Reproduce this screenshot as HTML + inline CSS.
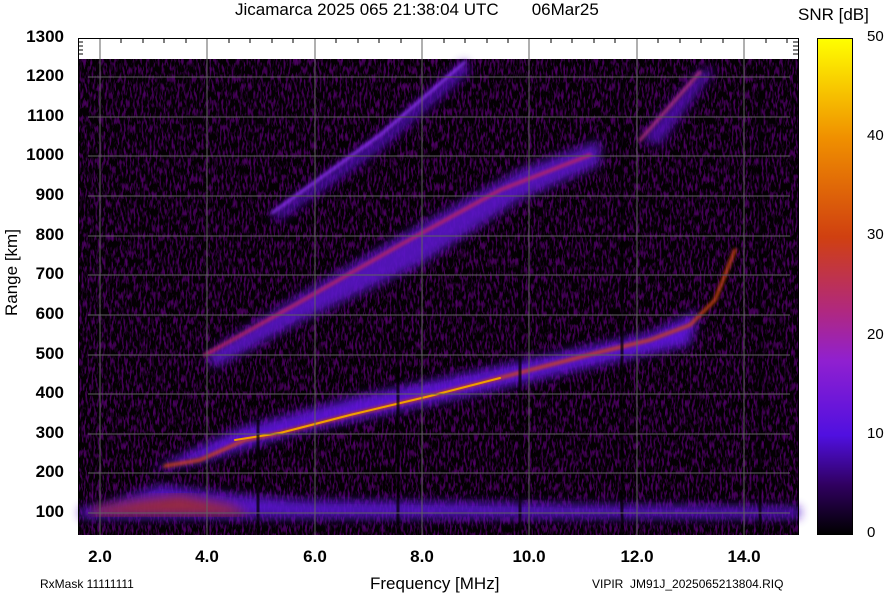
<!DOCTYPE html>
<html><head><meta charset="utf-8"><style>
html,body{margin:0;padding:0;background:#fff;}
body{width:884px;height:595px;position:relative;overflow:hidden;font-family:"Liberation Sans",sans-serif;}
.t{position:absolute;color:#000;white-space:nowrap;}
.yl{position:absolute;right:820px;font-size:17px;font-weight:bold;line-height:17px;}
.xl{position:absolute;top:547px;font-size:17px;font-weight:bold;width:60px;text-align:center;margin-left:-30px;}
.cl{position:absolute;left:867px;font-size:15px;line-height:16px;}
</style></head><body>
<div class="t" style="left:235px;top:0;font-size:17px;">Jicamarca 2025 065 21:38:04 UTC&nbsp;&nbsp;&nbsp;&nbsp;&nbsp;&nbsp;&nbsp;06Mar25</div>
<div class="t" style="left:798px;top:5px;font-size:17px;">SNR [dB]</div>
<svg width="884" height="595" style="position:absolute;left:0;top:0">
<defs>
<filter id="n" x="0" y="0" width="100%" height="100%">
<feTurbulence type="fractalNoise" baseFrequency="0.5 0.12" numOctaves="2" seed="3"/>
<feColorMatrix type="matrix" values="0 0 0 1.2 -0.6  0 0 0 0 0  0 0 0 2.2 -1.1  0 0 0 0 1"/>
</filter>
<filter id="b"><feGaussianBlur stdDeviation="5"/></filter>
<filter id="b2"><feGaussianBlur stdDeviation="1.5"/></filter>
<linearGradient id="cb" x1="0" y1="1" x2="0" y2="0">
<stop offset="0" stop-color="#000"/><stop offset="0.1" stop-color="#300060"/>
<stop offset="0.2" stop-color="#5010e0"/><stop offset="0.35" stop-color="#9020d0"/>
<stop offset="0.45" stop-color="#b02880"/><stop offset="0.6" stop-color="#d04010"/>
<stop offset="0.8" stop-color="#f09000"/><stop offset="1" stop-color="#ffff00"/>
</linearGradient>
</defs>
<rect x="78" y="38" width="720" height="497" fill="#fff"/>
<rect x="78" y="59" width="720" height="476" fill="#080006"/>
<rect x="78" y="59" width="720" height="476" filter="url(#n)" opacity="0.45"/>
<g filter="url(#b)" opacity="0.9">
<polygon points="80,518 800,518 800,507 600,505 450,502 300,500 230,494 160,485 100,505 80,508" fill="#5a18d0"/>
<polygon points="150,470 240,428 350,398 500,366 650,333 700,310 690,345 600,365 450,400 300,432 200,462" fill="#6018e0"/>
<polygon points="205,355 300,295 420,225 520,170 600,140 600,165 520,200 420,265 300,322 215,368" fill="#5a14c8"/>
<polygon points="270,215 380,135 465,60 470,72 380,150 280,220" fill="#5010b8"/>
<polygon points="640,140 700,70 715,70 660,145" fill="#5010b0"/>
</g>
<polygon points="90,515 250,515 230,505 180,495 140,500 95,508" fill="#b03010" filter="url(#b)" opacity="0.7"/>
<g fill="none" stroke-linecap="round">
<polyline points="165,466 200,460 245,440 280,433 350,415 430,396 530,370 600,352 650,340 690,325 715,300 735,250" stroke="#d04510" stroke-width="3" filter="url(#b2)"/>
<polyline points="235,440 280,433 350,415 430,396 500,378" stroke="#f0a000" stroke-width="2"/>
<polyline points="205,355 250,330 300,302 400,245 500,190 590,155" stroke="#c02860" stroke-width="3" filter="url(#b2)"/>
<polyline points="272,213 380,135 465,62" stroke="#8a30f0" stroke-width="3" filter="url(#b2)"/>
<polyline points="640,140 700,72" stroke="#b03080" stroke-width="3" filter="url(#b2)"/>
</g>
<g stroke="#000" stroke-width="3" opacity="0.7">
<line x1="258" y1="420" x2="258" y2="535"/><line x1="398" y1="280" x2="398" y2="535"/>
<line x1="520" y1="250" x2="520" y2="535"/><line x1="622" y1="80" x2="622" y2="535"/>
<line x1="760" y1="80" x2="760" y2="535"/>
</g>
<g stroke="#606060" stroke-width="1">
<line x1="207" y1="38" x2="207" y2="535"/><line x1="315" y1="38" x2="315" y2="535"/>
<line x1="422" y1="38" x2="422" y2="535"/><line x1="529" y1="38" x2="529" y2="535"/>
<line x1="637" y1="38" x2="637" y2="535"/><line x1="100" y1="38" x2="100" y2="535"/>
<line x1="744" y1="38" x2="744" y2="535"/>
<line x1="88" y1="77" x2="790" y2="77"/><line x1="88" y1="117" x2="790" y2="117"/>
<line x1="88" y1="156" x2="790" y2="156"/><line x1="88" y1="196" x2="790" y2="196"/>
<line x1="88" y1="236" x2="790" y2="236"/><line x1="88" y1="275" x2="790" y2="275"/>
<line x1="88" y1="315" x2="790" y2="315"/><line x1="88" y1="355" x2="790" y2="355"/>
<line x1="88" y1="394" x2="790" y2="394"/><line x1="88" y1="434" x2="790" y2="434"/>
<line x1="88" y1="473" x2="790" y2="473"/><line x1="88" y1="513" x2="790" y2="513"/>
</g>
<g stroke="#000" stroke-width="1">
<path d="M78.5 38.5H798.5M78.5 38V535M798.5 38V535"/>
<path d="M121 38v5M143 38v5M164 38v5M186 38v5M229 38v5M250 38v5M272 38v5M293 38v5M336 38v5M358 38v5M379 38v5M401 38v5M444 38v5M465 38v5M487 38v5M508 38v5M551 38v5M572 38v5M594 38v5M615 38v5M658 38v5M680 38v5M701 38v5M723 38v5M766 38v5M787 38v5"/>
<path d="M78 42h5M78 46h5M78 50h5M78 54h5M793 42h5M793 46h5M793 50h5M793 54h5"/>
</g>
<rect x="817.5" y="38.5" width="35" height="496" fill="url(#cb)" stroke="#000"/>
</svg>
<div class="yl" style="top:28px">1300</div><div class="yl" style="top:67px">1200</div>
<div class="yl" style="top:107px">1100</div><div class="yl" style="top:146px">1000</div>
<div class="yl" style="top:186px">900</div><div class="yl" style="top:226px">800</div>
<div class="yl" style="top:265px">700</div><div class="yl" style="top:305px">600</div>
<div class="yl" style="top:345px">500</div><div class="yl" style="top:384px">400</div>
<div class="yl" style="top:424px">300</div><div class="yl" style="top:463px">200</div>
<div class="yl" style="top:503px">100</div>
<div class="t" style="left:-28px;top:266px;font-size:17px;transform:rotate(-90deg);width:80px;text-align:center;">Range [km]</div>
<div class="xl" style="left:100px">2.0</div><div class="xl" style="left:207px">4.0</div>
<div class="xl" style="left:315px">6.0</div><div class="xl" style="left:422px">8.0</div>
<div class="xl" style="left:529px">10.0</div><div class="xl" style="left:637px">12.0</div>
<div class="xl" style="left:744px">14.0</div>
<div class="t" style="left:370px;top:574px;font-size:17px;">Frequency [MHz]</div>
<div class="t" style="left:40px;top:577px;font-size:12px;">RxMask 11111111</div>
<div class="t" style="left:592px;top:577px;font-size:12px;">VIPIR&nbsp; JM91J_2025065213804.RIQ</div>
<div class="cl" style="top:29px">50</div><div class="cl" style="top:128px">40</div>
<div class="cl" style="top:227px">30</div><div class="cl" style="top:327px">20</div>
<div class="cl" style="top:426px">10</div><div class="cl" style="top:525px">0</div>
</body></html>
